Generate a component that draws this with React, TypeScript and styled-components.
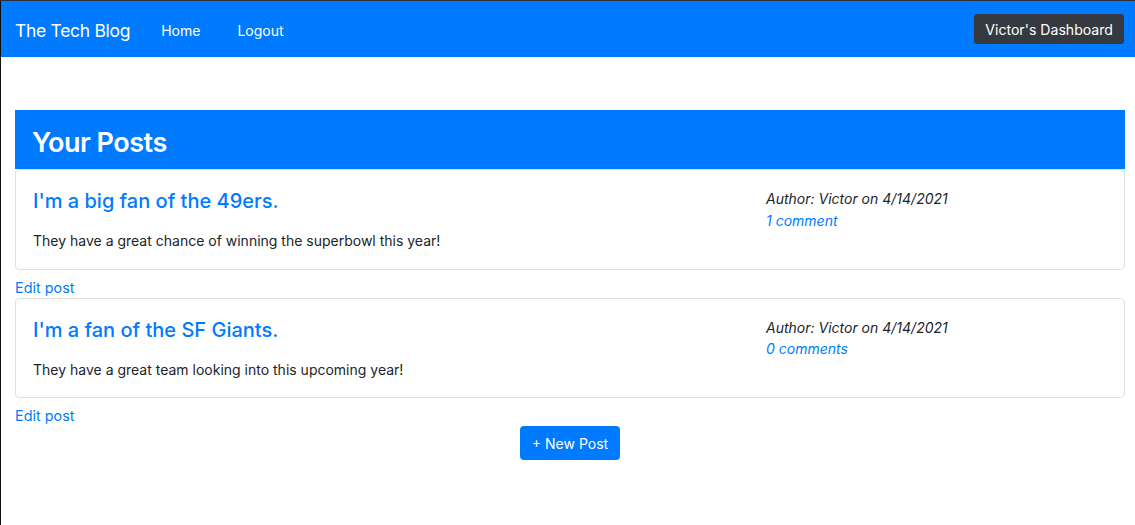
import React from "react";
import styled, { createGlobalStyle } from "styled-components";

const GlobalStyle = createGlobalStyle`
  html, body { margin: 0; padding: 0; background: #fff; }
  body {
    font-family: Inter, "Helvetica Neue", Arial, sans-serif;
    color: #212529;
    -webkit-font-smoothing: antialiased;
  }
  * { box-sizing: border-box; }
`;

const Frame = styled.div`
  min-height: 525px;
  border-top: 1px solid #2b3036;
  border-left: 1px solid #0d0d0d;
  display: flex;
  flex-direction: column;
`;

const NavBar = styled.nav`
  height: 56px;
  background: #007bff;
  display: flex;
  align-items: center;
  padding: 0 11px 0 14px;
`;

const Brand = styled.a`
  color: #fff;
  font-size: 17.5px;
  letter-spacing: -0.3px;
  line-height: 30px;
  padding-top: 3px;
  text-decoration: none;
  margin-right: 31px;
`;

const NavLinks = styled.div`
  display: flex;
  align-items: center;
  gap: 37px;
  flex: 1;
  padding-top: 2px;
`;

const NavLink = styled.a`
  color: #fff;
  font-size: 14px;
  font-weight: 400;
  text-decoration: none;
`;

const DarkButton = styled.button`
  background: #343a40;
  color: #fff;
  border: none;
  border-radius: 3px;
  height: 30px;
  padding: 0 11px;
  font-family: inherit;
  font-size: 14.1px;
  font-weight: 400;
`;

const Main = styled.main`
  padding: 53px 10px 0 14px;
  display: flex;
  flex-direction: column;
`;

const SectionHeader = styled.h2`
  margin: 0;
  height: 59px;
  background: #007bff;
  color: #fff;
  font-size: 27px;
  letter-spacing: -0.5px;
  font-weight: 600;
  display: flex;
  align-items: center;
  padding: 5px 0 0 17px;
`;

const Card = styled.article`
  border: 1px solid rgba(0, 0, 0, 0.125);
  border-radius: 4px;
  padding: 18px 16px 17px 17px;
  display: grid;
  grid-template-columns: 733px 1fr;
`;

const PostTitle = styled.a`
  display: block;
  color: #007bff;
  font-size: 20px;
  font-weight: 500;
  line-height: 26px;
  text-decoration: none;
  margin-bottom: 16px;
`;

const PostText = styled.p`
  margin: 0;
  font-size: 14px;
  line-height: 21.6px;
`;

const Meta = styled.div`
  font-size: 14px;
  line-height: 21.6px;
  font-style: italic;
`;

const MetaLink = styled.a`
  display: block;
  color: #007bff;
  text-decoration: none;
`;

const EditLink = styled.a`
  display: block;
  color: #007bff;
  font-size: 14.4px;
  line-height: 21px;
  margin-top: 7px;
  text-decoration: none;
  align-self: flex-start;
`;

const PrimaryButton = styled.button`
  align-self: center;
  background: #007bff;
  color: #fff;
  border: none;
  border-radius: 4px;
  height: 34px;
  padding: 0 12px;
  font-family: inherit;
  font-size: 14px;
  font-weight: 400;
`;

type Post = { title: string; body: string; author: string; date: string; comments: number };

const posts: Post[] = [
  {
    title: "I'm a big fan of the 49ers.",
    body: "They have a great chance of winning the superbowl this year!",
    author: "Victor",
    date: "4/14/2021",
    comments: 1,
  },
  {
    title: "I'm a fan of the SF Giants.",
    body: "They have a great team looking into this upcoming year!",
    author: "Victor",
    date: "4/14/2021",
    comments: 0,
  },
];

export default function App() {
  return (
    <>
      <GlobalStyle />
      <Frame>
        <NavBar>
          <Brand href="#">The Tech Blog</Brand>
          <NavLinks>
            <NavLink href="#">Home</NavLink>
            <NavLink href="#">Logout</NavLink>
          </NavLinks>
          <DarkButton>Victor's Dashboard</DarkButton>
        </NavBar>
        <Main>
          <SectionHeader>Your Posts</SectionHeader>
          {posts.map((p, i) => (
            <React.Fragment key={i}>
              <Card>
                <div>
                  <PostTitle href="#">{p.title}</PostTitle>
                  <PostText>{p.body}</PostText>
                </div>
                <Meta>
                  <div>
                    Author: {p.author} on {p.date}
                  </div>
                  <MetaLink href="#">
                    {p.comments} {p.comments === 1 ? "comment" : "comments"}
                  </MetaLink>
                </Meta>
              </Card>
              <EditLink href="#">Edit post</EditLink>
            </React.Fragment>
          ))}
          <PrimaryButton>+ New Post</PrimaryButton>
        </Main>
      </Frame>
    </>
  );
}
